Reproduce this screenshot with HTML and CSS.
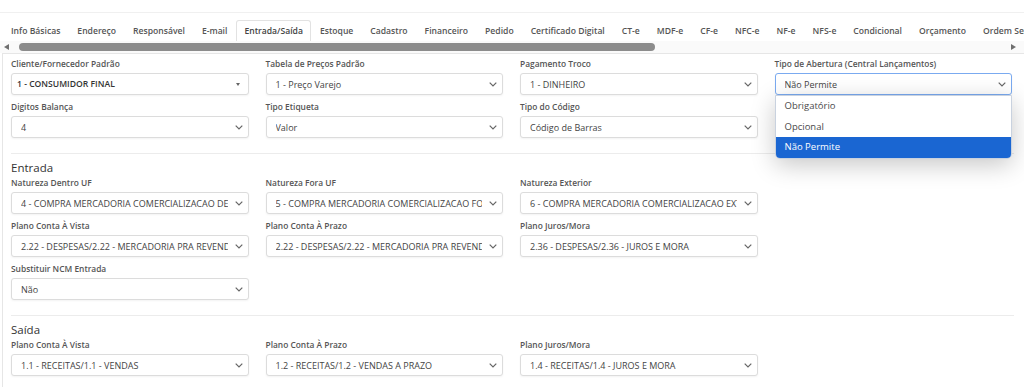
FILE: index.html
```html
<!DOCTYPE html>
<html lang="pt-BR">
<head>
<meta charset="utf-8">
<title>Entrada/Saída</title>
<link rel="stylesheet" href="styles.css">
</head>
<body>
<div class="topline"></div>
<div class="tabs">
  <span class="tab">Info Básicas</span>
  <span class="tab">Endereço</span>
  <span class="tab">Responsável</span>
  <span class="tab">E-mail</span>
  <span class="tab active">Entrada/Saída</span>
  <span class="tab">Estoque</span>
  <span class="tab">Cadastro</span>
  <span class="tab">Financeiro</span>
  <span class="tab">Pedido</span>
  <span class="tab">Certificado Digital</span>
  <span class="tab">CT-e</span>
  <span class="tab">MDF-e</span>
  <span class="tab">CF-e</span>
  <span class="tab">NFC-e</span>
  <span class="tab">NF-e</span>
  <span class="tab">NFS-e</span>
  <span class="tab">Condicional</span>
  <span class="tab">Orçamento</span>
  <span class="tab">Ordem Serviço</span>
</div>
<div class="hscroll">
  <span class="arrow arrow-left"></span>
  <div class="track"><div class="thumb"></div></div>
  <span class="arrow arrow-right"></span>
</div>

<div class="panel">
  <div class="grid">
    <div class="field">
      <label>Cliente/Fornecedor Padrão</label>
      <div class="select select2"><span class="val strong">1 - CONSUMIDOR FINAL</span><span class="caret"></span></div>
    </div>
    <div class="field">
      <label>Tabela de Preços Padrão</label>
      <div class="select"><span class="val">1 - Preço Varejo</span><svg class="chev" viewBox="0 0 8 5"><polyline points="0.7,0.7 4,4 7.3,0.7"/></svg></div>
    </div>
    <div class="field">
      <label>Pagamento Troco</label>
      <div class="select"><span class="val">1 - DINHEIRO</span><svg class="chev" viewBox="0 0 8 5"><polyline points="0.7,0.7 4,4 7.3,0.7"/></svg></div>
    </div>
    <div class="field open">
      <label>Tipo de Abertura (Central Lançamentos)</label>
      <div class="select focus"><span class="val">Não Permite</span><svg class="chev" viewBox="0 0 8 5"><polyline points="0.7,0.7 4,4 7.3,0.7"/></svg></div>
      <ul class="dropdown">
        <li>Obrigatório</li>
        <li>Opcional</li>
        <li class="selected">Não Permite</li>
      </ul>
    </div>
    <div class="field">
      <label>Digitos Balança</label>
      <div class="select"><span class="val">4</span><svg class="chev" viewBox="0 0 8 5"><polyline points="0.7,0.7 4,4 7.3,0.7"/></svg></div>
    </div>
    <div class="field">
      <label>Tipo Etiqueta</label>
      <div class="select"><span class="val">Valor</span><svg class="chev" viewBox="0 0 8 5"><polyline points="0.7,0.7 4,4 7.3,0.7"/></svg></div>
    </div>
    <div class="field">
      <label>Tipo do Código</label>
      <div class="select"><span class="val">Código de Barras</span><svg class="chev" viewBox="0 0 8 5"><polyline points="0.7,0.7 4,4 7.3,0.7"/></svg></div>
    </div>
  </div>

  <hr class="divider">
  <h3 class="section">Entrada</h3>
  <div class="grid">
    <div class="field">
      <label>Natureza Dentro UF</label>
      <div class="select"><span class="val">4 - COMPRA MERCADORIA COMERCIALIZACAO DENTRO UF</span><svg class="chev" viewBox="0 0 8 5"><polyline points="0.7,0.7 4,4 7.3,0.7"/></svg></div>
    </div>
    <div class="field">
      <label>Natureza Fora UF</label>
      <div class="select"><span class="val">5 - COMPRA MERCADORIA COMERCIALIZACAO FORA UF</span><svg class="chev" viewBox="0 0 8 5"><polyline points="0.7,0.7 4,4 7.3,0.7"/></svg></div>
    </div>
    <div class="field">
      <label>Natureza Exterior</label>
      <div class="select"><span class="val">6 - COMPRA MERCADORIA COMERCIALIZACAO EXTERIOR</span><svg class="chev" viewBox="0 0 8 5"><polyline points="0.7,0.7 4,4 7.3,0.7"/></svg></div>
    </div>
    <div class="field empty"></div>
    <div class="field">
      <label>Plano Conta À Vista</label>
      <div class="select"><span class="val">2.22 - DESPESAS/2.22 - MERCADORIA PRA REVENDA</span><svg class="chev" viewBox="0 0 8 5"><polyline points="0.7,0.7 4,4 7.3,0.7"/></svg></div>
    </div>
    <div class="field">
      <label>Plano Conta À Prazo</label>
      <div class="select"><span class="val">2.22 - DESPESAS/2.22 - MERCADORIA PRA REVENDA</span><svg class="chev" viewBox="0 0 8 5"><polyline points="0.7,0.7 4,4 7.3,0.7"/></svg></div>
    </div>
    <div class="field">
      <label>Plano Juros/Mora</label>
      <div class="select"><span class="val">2.36 - DESPESAS/2.36 - JUROS E MORA</span><svg class="chev" viewBox="0 0 8 5"><polyline points="0.7,0.7 4,4 7.3,0.7"/></svg></div>
    </div>
    <div class="field empty"></div>
    <div class="field">
      <label>Substituir NCM Entrada</label>
      <div class="select"><span class="val">Não</span><svg class="chev" viewBox="0 0 8 5"><polyline points="0.7,0.7 4,4 7.3,0.7"/></svg></div>
    </div>
  </div>

  <hr class="divider">
  <h3 class="section">Saída</h3>
  <div class="grid">
    <div class="field">
      <label>Plano Conta À Vista</label>
      <div class="select"><span class="val">1.1 - RECEITAS/1.1 - VENDAS</span><svg class="chev" viewBox="0 0 8 5"><polyline points="0.7,0.7 4,4 7.3,0.7"/></svg></div>
    </div>
    <div class="field">
      <label>Plano Conta À Prazo</label>
      <div class="select"><span class="val">1.2 - RECEITAS/1.2 - VENDAS A PRAZO</span><svg class="chev" viewBox="0 0 8 5"><polyline points="0.7,0.7 4,4 7.3,0.7"/></svg></div>
    </div>
    <div class="field">
      <label>Plano Juros/Mora</label>
      <div class="select"><span class="val">1.4 - RECEITAS/1.4 - JUROS E MORA</span><svg class="chev" viewBox="0 0 8 5"><polyline points="0.7,0.7 4,4 7.3,0.7"/></svg></div>
    </div>
  </div>
</div>
</body>
</html>
```

FILE: styles.css
```css
* { box-sizing: border-box; }
html, body {
  margin: 0;
  padding: 0;
  background: #fff;
  overflow: hidden;
}
body {
  font-family: "Open Sans", "Noto Sans", sans-serif;
  color: #444;
  width: 1024px;
  height: 387px;
}
.topline {
  height: 13px;
  border-bottom: 1px solid #f0f0f0;
}
.tabs {
  display: flex;
  white-space: nowrap;
  overflow: hidden;
  padding: 7px 0 0 2.5px;
  height: 28px;
}
.tab {
  flex: none;
  height: 21px;
  line-height: 21px;
  padding: 0 7.5px;
  font-size: 8.6px;
  font-weight: 600;
  color: #555;
  border: 1px solid transparent;
  border-bottom: none;
  border-radius: 3px 3px 0 0;
}
.tab.active {
  border-color: #e2e2e2;
  color: #444;
  background: #fff;
}
.hscroll {
  display: flex;
  align-items: center;
  height: 12px;
  background: #fafafa;
}
.arrow {
  flex: none;
  width: 0;
  height: 0;
  border-top: 3.5px solid transparent;
  border-bottom: 3.5px solid transparent;
}
.arrow-left {
  margin: 0 0 0 4px;
  border-right: 5px solid #6f6f6f;
}
.arrow-right {
  margin: 0 8px 0 4px;
  border-left: 5px solid #6f6f6f;
}
.track {
  flex: 1;
  height: 8px;
  padding-left: 10px;
}
.thumb {
  width: 636px;
  height: 8px;
  border-radius: 4px;
  background: #8c8c8c;
}
.panel {
  margin-left: 2px;
  border-top: 1px solid #e6e6e6;
  border-left: 1px solid #e6e6e6;
  padding: 4px 0 0 8px;
  height: 340px;
}
.grid {
  display: grid;
  grid-template-columns: repeat(4, 237.5px);
  column-gap: 17px;
  row-gap: 6px;
}
.field {
  position: relative;
}
.field label {
  display: block;
  font-size: 8.4px;
  line-height: 12px;
  font-weight: 600;
  color: #555;
  margin-bottom: 3px;
  white-space: nowrap;
}
.select {
  display: flex;
  align-items: center;
  height: 22px;
  padding: 0 5px 0 9px;
  border: 1px solid #dcdcdc;
  border-radius: 3px;
  background: #fff;
  box-shadow: 0 1px 2px rgba(0, 0, 0, 0.05);
  font-size: 9px;
  color: #444;
}
.select.select2 {
  padding-left: 5px;
}
.select .val {
  flex: 1;
  min-width: 0;
  overflow: hidden;
  white-space: nowrap;
  margin-right: 7px;
}
.select .val.strong {
  color: #333;
  font-weight: 600;
  font-size: 8.6px;
}
.select.focus {
  border-color: #7aaaf0;
}
.chev {
  flex: none;
  width: 8px;
  height: 5px;
  fill: none;
  stroke: #666;
  stroke-width: 1.2;
}
.caret {
  flex: none;
  width: 0;
  height: 0;
  margin-right: 3px;
  border-left: 2.5px solid transparent;
  border-right: 2.5px solid transparent;
  border-top: 3px solid #666;
}
.dropdown {
  position: absolute;
  top: 100%;
  left: 0;
  right: 0;
  margin: 0;
  padding: 0;
  list-style: none;
  background: #fff;
  border: 1px solid #c9d2df;
  border-radius: 0 0 5px 5px;
  box-shadow: 0 6px 24px rgba(0, 0, 0, 0.22);
  overflow: hidden;
  z-index: 10;
}
.dropdown li {
  height: 20.5px;
  line-height: 20.5px;
  padding-left: 9px;
  font-size: 9.5px;
  color: #4a4a4a;
}
.dropdown li.selected {
  background: #1a66d2;
  color: #fff;
}
.divider {
  margin: 15px 0 0 0;
  width: 1003px;
  border: none;
  border-top: 1px solid #ececec;
  height: 0;
}
.section {
  margin: 7px 0 2px 0;
  font-size: 11.5px;
  line-height: 14px;
  font-weight: 500;
  color: #333;
}
```
